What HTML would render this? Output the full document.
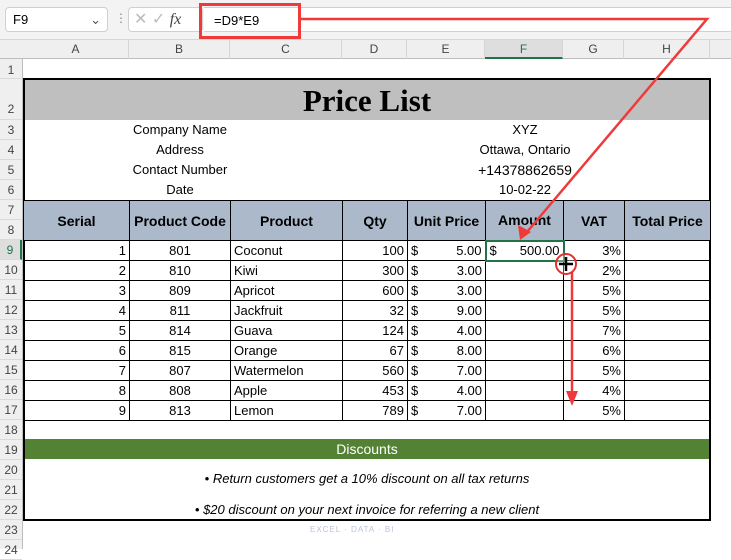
<!DOCTYPE html>
<html><head><style>
*{margin:0;padding:0;box-sizing:border-box}
body{width:731px;height:549px;overflow:hidden;background:#fff;font-family:"Liberation Sans",Arial,sans-serif;position:relative}
.a{position:absolute}
.top{left:0;top:0;width:731px;height:40px;background:#f3f3f3;border-bottom:1px solid #d6d6d6}
.colh{left:0;top:40px;width:731px;height:19px;background:#efefef;border-bottom:1px solid #bdbdbd}
.ch{position:absolute;top:40px;height:19px;font-size:12px;color:#444;text-align:center;line-height:19px;border-right:1px solid #d6d6d6}
.rowh{left:0;top:59px;width:23px;height:490px;background:#efefef;border-right:1px solid #bdbdbd}
.rn{position:absolute;left:0;width:22px;font-size:12px;color:#444;text-align:center;border-bottom:1px solid #dadada}
table{border-collapse:collapse;position:absolute;left:23px;top:200px;font-size:13px}
td{border:1px solid #000;height:20px;padding:0 3px;white-space:nowrap}
th{border:1px solid #000;height:40px;background:#acb9ca;font-size:14px}
.r{text-align:right}.c{text-align:center}
.info{position:absolute;font-size:13px;text-align:center}
</style></head><body>
<div class="a top"></div>
<div class="a" style="left:5px;top:7px;width:103px;height:25px;background:#fff;border:1px solid #d0d0d0;border-radius:4px;font-size:13px;line-height:23px;padding-left:7px">F9<span style="position:absolute;right:6px;top:0;color:#555">&#8964;</span></div>
<div class="a" style="left:115px;top:11px;color:#888;font-size:12px">&#8942;</div>
<div class="a" style="left:128px;top:7px;width:75px;height:25px;background:#fff;border:1px solid #d0d0d0;border-radius:4px;color:#bbb;font-size:16px;line-height:23px;padding-left:5px">&#x2715; &#x2713; <i style="color:#444;font-family:'Liberation Serif',serif">fx</i></div>
<div class="a" style="left:204px;top:7px;width:527px;height:25px;background:#fff;border-top:1px solid #d0d0d0;border-bottom:1px solid #d0d0d0"></div>
<div class="a" style="left:199px;top:3px;width:102px;height:36px;border:3px solid #f03a3a;font-size:13px;line-height:30px;padding-left:12px">=D9*E9</div>
<div class="a colh"></div>
<div class="ch" style="left:23px;width:106px">A</div>
<div class="ch" style="left:129px;width:101px">B</div>
<div class="ch" style="left:230px;width:112px">C</div>
<div class="ch" style="left:342px;width:65px">D</div>
<div class="ch" style="left:407px;width:78px">E</div>
<div class="ch" style="left:485px;width:78px;background:#dedede;color:#217346;border-bottom:2px solid #217346">F</div>
<div class="ch" style="left:563px;width:61px">G</div>
<div class="ch" style="left:624px;width:86px">H</div>
<div class="a rowh"></div>
<div class="rn" style="top:59px;height:20px;line-height:22px">1</div>
<div class="rn" style="top:79px;height:41px;line-height:60px">2</div>
<div class="rn" style="top:120px;height:20px;line-height:20px">3</div>
<div class="rn" style="top:140px;height:20px;line-height:20px">4</div>
<div class="rn" style="top:160px;height:20px;line-height:20px">5</div>
<div class="rn" style="top:180px;height:20px;line-height:20px">6</div>
<div class="rn" style="top:200px;height:20px;line-height:20px">7</div>
<div class="rn" style="top:220px;height:20px;line-height:20px">8</div>
<div class="rn" style="top:240px;height:20px;line-height:20px;background:#dedede;color:#217346;border-right:2px solid #217346">9</div>
<div class="rn" style="top:260px;height:20px;line-height:20px">10</div>
<div class="rn" style="top:280px;height:20px;line-height:20px">11</div>
<div class="rn" style="top:300px;height:20px;line-height:20px">12</div>
<div class="rn" style="top:320px;height:20px;line-height:20px">13</div>
<div class="rn" style="top:340px;height:20px;line-height:20px">14</div>
<div class="rn" style="top:360px;height:20px;line-height:20px">15</div>
<div class="rn" style="top:380px;height:20px;line-height:20px">16</div>
<div class="rn" style="top:400px;height:20px;line-height:20px">17</div>
<div class="rn" style="top:420px;height:20px;line-height:20px">18</div>
<div class="rn" style="top:440px;height:20px;line-height:20px">19</div>
<div class="rn" style="top:460px;height:20px;line-height:20px">20</div>
<div class="rn" style="top:480px;height:20px;line-height:20px">21</div>
<div class="rn" style="top:500px;height:20px;line-height:20px">22</div>
<div class="rn" style="top:520px;height:20px;line-height:20px">23</div>
<div class="rn" style="top:540px;height:20px;line-height:20px">24</div>

<div class="a" style="left:23px;top:78px;width:688px;height:443px;border:2px solid #000"></div>
<div class="a" style="left:25px;top:80px;width:684px;height:40px;background:#bfbfbf;font-family:'Liberation Serif',serif;font-weight:bold;font-size:31px;text-align:center;line-height:42px">Price List</div>
<div class="info" style="left:110px;width:140px;top:122px">Company Name</div>
<div class="info" style="left:110px;width:140px;top:142px">Address</div>
<div class="info" style="left:110px;width:140px;top:162px">Contact Number</div>
<div class="info" style="left:110px;width:140px;top:182px">Date</div>
<div class="info" style="left:455px;width:140px;top:122px">XYZ</div>
<div class="info" style="left:455px;width:140px;top:142px">Ottawa, Ontario</div>
<div class="info" style="left:455px;width:140px;top:162px;font-size:14px">+14378862659</div>
<div class="info" style="left:455px;width:140px;top:182px">10-02-22</div>

<table>
<colgroup><col style="width:106px"><col style="width:101px"><col style="width:112px"><col style="width:65px"><col style="width:78px"><col style="width:78px"><col style="width:61px"><col style="width:86px"></colgroup>
<tr><th>Serial</th><th>Product Code</th><th>Product</th><th>Qty</th><th>Unit Price</th><th>Amount</th><th>VAT</th><th>Total Price</th></tr>
<tr><td class="r">1</td><td class="c">801</td><td>Coconut</td><td class="r">100</td><td>$<span style="float:right">5.00</span></td><td style="border:2px solid #217346">$<span style="float:right">500.00</span></td><td class="r">3%</td><td></td></tr>
<tr><td class="r">2</td><td class="c">810</td><td>Kiwi</td><td class="r">300</td><td>$<span style="float:right">3.00</span></td><td></td><td class="r">2%</td><td></td></tr>
<tr><td class="r">3</td><td class="c">809</td><td>Apricot</td><td class="r">600</td><td>$<span style="float:right">3.00</span></td><td></td><td class="r">5%</td><td></td></tr>
<tr><td class="r">4</td><td class="c">811</td><td>Jackfruit</td><td class="r">32</td><td>$<span style="float:right">9.00</span></td><td></td><td class="r">5%</td><td></td></tr>
<tr><td class="r">5</td><td class="c">814</td><td>Guava</td><td class="r">124</td><td>$<span style="float:right">4.00</span></td><td></td><td class="r">7%</td><td></td></tr>
<tr><td class="r">6</td><td class="c">815</td><td>Orange</td><td class="r">67</td><td>$<span style="float:right">8.00</span></td><td></td><td class="r">6%</td><td></td></tr>
<tr><td class="r">7</td><td class="c">807</td><td>Watermelon</td><td class="r">560</td><td>$<span style="float:right">7.00</span></td><td></td><td class="r">5%</td><td></td></tr>
<tr><td class="r">8</td><td class="c">808</td><td>Apple</td><td class="r">453</td><td>$<span style="float:right">4.00</span></td><td></td><td class="r">4%</td><td></td></tr>
<tr><td class="r">9</td><td class="c">813</td><td>Lemon</td><td class="r">789</td><td>$<span style="float:right">7.00</span></td><td></td><td class="r">5%</td><td></td></tr>
</table>

<div class="a" style="left:25px;top:439px;width:684px;height:20px;background:#548235;color:#fff;font-size:14px;text-align:center;line-height:20px">Discounts</div>
<div class="info" style="left:25px;width:684px;top:471px;font-style:italic">• Return customers get a 10% discount on all tax returns</div>
<div class="info" style="left:25px;width:684px;top:502px;font-style:italic">• $20 discount on your next invoice for referring a new client</div>
<div class="a" style="left:310px;top:525px;font-size:8px;color:#b8c4dc;letter-spacing:1px">EXCEL · DATA · BI</div>

<svg class="a" style="left:0;top:0" width="731" height="549">
<g stroke="#f03a3a" stroke-width="2.5" fill="none">
<polyline points="301,19 707,19 527,232"/>
<line x1="572" y1="272" x2="572" y2="395"/>
</g>
<polygon points="520,240 518,225 531,232" fill="#f03a3a"/>
<polygon points="572,406 566,391 578,391" fill="#f03a3a"/>
<circle cx="566" cy="264" r="10" fill="#fff" fill-opacity="0.3" stroke="#e03030" stroke-width="2"/>
<path d="M566 257v14M559 264h14" stroke="#000" stroke-width="2.5"/>
</svg>
</body></html>
